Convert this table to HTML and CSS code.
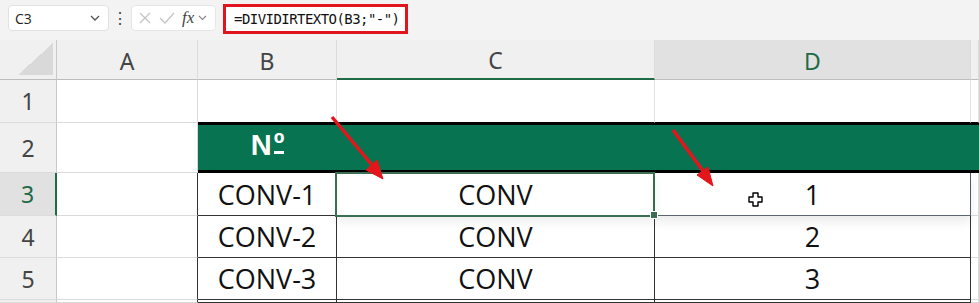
FILE: index.html
```html
<!DOCTYPE html>
<html lang="pt">
<head>
  <meta charset="UTF-8" />
  <title>Planilha</title>
  <link rel="stylesheet" href="styles.css">
</head>
<body>
  <!-- Formula bar -->
  <div class="formula-bar">
    <div class="name-box">
      <span>C3</span>
      <svg class="chev" width="10" height="6" viewBox="0 0 10 6"><path d="M1 1l4 4 4-4" fill="none" stroke="#555" stroke-width="1.3"/></svg>
    </div>
    <div class="dots">&#8942;</div>
    <div class="fn-box">
      <svg width="14" height="14" viewBox="0 0 14 14"><path d="M2 2l10 10M12 2L2 12" stroke="#c4c4c4" stroke-width="1.3"/></svg>
      <svg width="16" height="14" viewBox="0 0 16 14"><path d="M1 7l5 5L15 2" fill="none" stroke="#c4c4c4" stroke-width="1.3"/></svg>
      <span class="fx">fx</span>
      <svg width="9" height="6" viewBox="0 0 9 6"><path d="M1 1l3.5 3.5L8 1" fill="none" stroke="#888" stroke-width="1.1"/></svg>
    </div>
    <div class="formula">=DIVIDIRTEXTO(B3;"-")</div>
  </div>

  <!-- Grid -->
  <div class="sheet">
    <div class="corner"><span class="tri"></span></div>
    <div class="col-head">A</div>
    <div class="col-head">B</div>
    <div class="col-head col-sel">C</div>
    <div class="col-head col-hot">D</div>
    <div class="col-head"></div>

    <div class="row-head">1</div>
    <div class="cell"></div>
    <div class="cell above-title"></div>
    <div class="cell above-title"></div>
    <div class="cell above-title"></div>
    <div class="cell above-title"></div>

    <div class="row-head">2</div>
    <div class="cell"></div>
    <div class="cell title">N<span class="ord">&ordm;</span></div>
    <div class="cell title"></div>
    <div class="cell title"></div>
    <div class="cell title"></div>

    <div class="row-head row-hot">3</div>
    <div class="cell edge"></div>
    <div class="cell data">CONV-1</div>
    <div class="cell data active">CONV</div>
    <div class="cell data lifted">
      <svg class="cursor" width="15" height="15" viewBox="0 0 15 15"><path d="M5 1h5v4h4v5h-4v4H5v-4H1V5h4z" fill="#fff" stroke="#000" stroke-width="1.4" stroke-linejoin="round"/></svg>
      1
    </div>
    <div class="cell"></div>

    <div class="row-head">4</div>
    <div class="cell edge"></div>
    <div class="cell data">CONV-2</div>
    <div class="cell data">CONV</div>
    <div class="cell data">2</div>
    <div class="cell"></div>

    <div class="row-head">5</div>
    <div class="cell edge"></div>
    <div class="cell data">CONV-3</div>
    <div class="cell data">CONV</div>
    <div class="cell data">3</div>
    <div class="cell"></div>

    <div class="row-head"></div>
    <div class="cell edge"></div>
    <div class="cell data"></div>
    <div class="cell data"></div>
    <div class="cell data"></div>
    <div class="cell"></div>
  </div>

  <!-- Red pointers -->
  <svg class="arrows" width="979" height="303" viewBox="0 0 979 303">
    <g fill="#e4151b" stroke="#e4151b">
      <line x1="332" y1="117" x2="372" y2="165" stroke-width="3.5"/>
      <polygon points="383,179 366,170 377,160" stroke-width="1"/>
      <line x1="673" y1="130" x2="703" y2="171" stroke-width="3.5"/>
      <polygon points="713,186 697,175 708,167" stroke-width="1"/>
    </g>
  </svg>
</body>
</html>
```

FILE: styles.css
```css
* {
  box-sizing: border-box;
}

body {
  margin: 0;
  width: 979px;
  height: 303px;
  overflow: hidden;
  position: relative;
  background-color: #fff;
  font-family: "Open Sans", "Noto Sans", sans-serif;
}

/* formula bar */
.formula-bar {
  height: 40px;
  background-color: #f3f3f3;
  display: flex;
  align-items: flex-start;
  padding: 5px 0 0 8px;
}

.name-box {
  width: 101px;
  height: 26px;
  background-color: #fff;
  border: 1px solid #e2e2e2;
  border-radius: 4px;
  display: flex;
  align-items: center;
  justify-content: space-between;
  padding: 0 8px 0 6px;
  font-size: 14px;
  color: #222;
}

.dots {
  width: 22px;
  text-align: center;
  font-size: 16px;
  line-height: 26px;
  color: #444;
}

.fn-box {
  width: 85px;
  height: 26px;
  background-color: #fff;
  border: 1px solid #e6e6e6;
  border-radius: 4px;
  display: flex;
  align-items: center;
  gap: 7px;
  padding-left: 6px;
}

.fx {
  font-family: "Liberation Serif", serif;
  font-style: italic;
  font-size: 17px;
  color: #444;
  margin-right: -3px;
}

.formula {
  margin-left: 7px;
  margin-top: -1px;
  width: 185px;
  height: 30px;
  background-color: #fff;
  border: 3px solid #e0161c;
  padding-left: 8px;
  font-family: "DejaVu Sans Mono", monospace;
  font-size: 14px;
  letter-spacing: -0.55px;
  line-height: 24px;
  color: #111;
}

/* sheet grid */
.sheet {
  display: grid;
  grid-template-columns: 57px 141px 139px 318px 316px 1fr;
  grid-template-rows: 40px 43px 50px 43px 42px 42px 3px;
}

.corner,
.col-head,
.row-head {
  background-color: #f0f0f0;
  color: #444;
  font-family: "Noto Sans", sans-serif;
  font-size: 23px;
  display: flex;
  align-items: center;
  justify-content: center;
}

.corner {
  border-right: 1px solid #c8c8c8;
  border-bottom: 1px solid #bdbdbd;
  padding: 3px 3px 4px 18px;
}

.tri {
  width: 100%;
  height: 100%;
  background: linear-gradient(to bottom right, transparent 50%, #d9d9d9 50%);
}

.col-head {
  border-right: 1px solid #dcdcdc;
  border-bottom: 1px solid #bdbdbd;
  padding-top: 2px;
}

.col-sel {
  border-bottom: 2px solid #1e6b46;
}

.col-hot {
  background-color: #e1e1e1;
  color: #1e6b46;
}

.row-head {
  border-right: 1px solid #c8c8c8;
  border-bottom: 1px solid #dcdcdc;
}

.row-hot {
  background-color: #e1e1e1;
  color: #1e6b46;
  border-right: 2px solid #1e6b46;
}

.cell {
  border-right: 1px solid #dadada;
  border-bottom: 1px solid #dadada;
  display: flex;
  align-items: center;
  justify-content: center;
  font-size: 27px;
  color: #111;
}

.above-title {
  border-right-color: #e3e3e3;
  border-bottom: 1px solid #000;
}

.title {
  background-color: #077350;
  border-top: 2px solid #000;
  border-bottom: 3px solid #000;
  border-right: none;
  color: #fff;
  font-family: "Liberation Sans", sans-serif;
  font-weight: bold;
  font-size: 29px;
  padding-bottom: 4px;
}

/* superscript o with its bar underneath */
.ord {
  display: inline-block;
  font-size: 29px;
  line-height: 15px;
  height: 19px;
  padding-top: 1px;
  border-bottom: 3px solid #fff;
  margin-left: 2px;
  align-self: flex-start;
  margin-top: 10px;
}

.edge {
  border-right-color: #333;
}

.data {
  border-right: 1px solid #333;
  border-bottom: 1px solid #333;
}

/* selected cell C3 with fill handle */
.active {
  position: relative;
  box-shadow: 0 6px 10px rgba(0, 0, 0, 0.07);
}

.active::after {
  content: "";
  position: absolute;
  left: -2px;
  top: -1px;
  right: -1px;
  bottom: -2px;
  border: 2px solid #3b6e52;
}

.active::before {
  content: "";
  position: absolute;
  right: -4px;
  bottom: -4px;
  width: 6px;
  height: 6px;
  background-color: #3b6e52;
  border: 1px solid #fff;
  z-index: 2;
}

.lifted {
  position: relative;
  border-right-color: #4f5a66;
  border-bottom-color: #5a6470;
  box-shadow: 0 6px 10px rgba(0, 0, 0, 0.08);
}

.cursor {
  position: absolute;
  left: 93px;
  top: 19px;
}

.arrows {
  position: absolute;
  left: 0;
  top: 0;
  pointer-events: none;
}
```
